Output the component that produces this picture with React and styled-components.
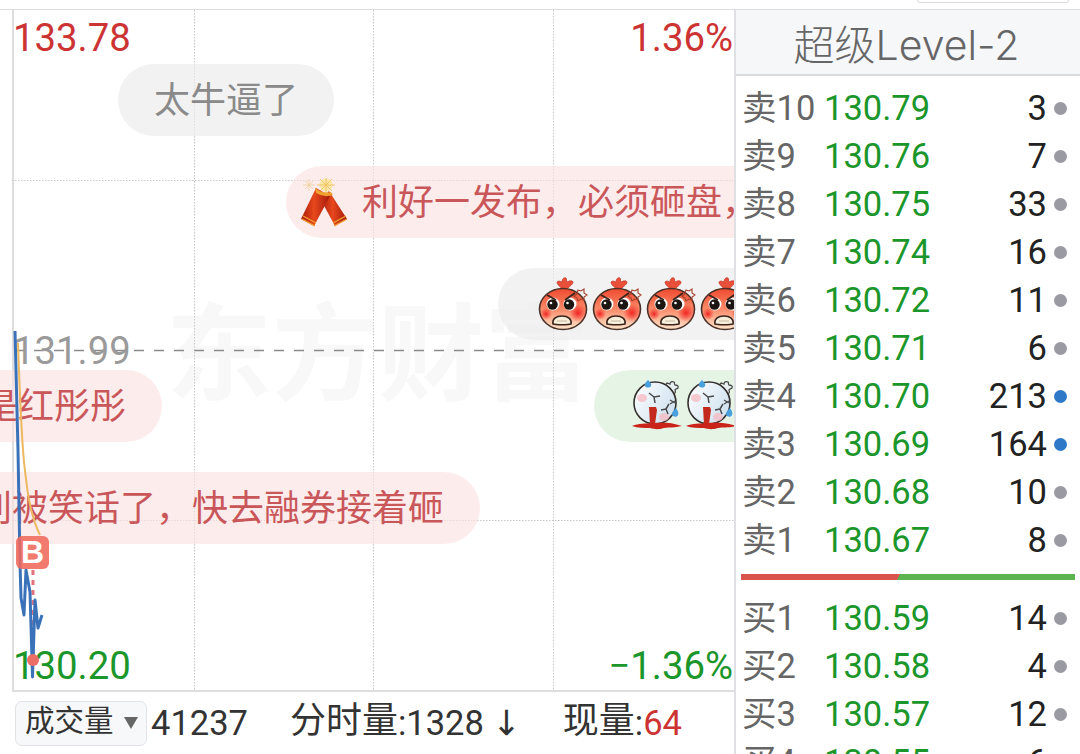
import React from 'react';
import styled, {createGlobalStyle} from 'styled-components';

const GlobalStyle = createGlobalStyle`
  html, body {
    margin: 0;
    padding: 0;
    background: #fff;
    overflow: hidden;
  }
  body {
    font-family: Roboto, "Noto Sans CJK SC", sans-serif;
  }
`;

const Page = styled.div`
  width: 1080px;
  height: 754px;
  display: flex;
  flex-direction: column;
  overflow: hidden;
`;

const TopStrip = styled.div`
  height: 9px;
  flex: none;
  display: flex;
  justify-content: flex-end;
  align-items: flex-start;
  padding-right: 11px;
  border-bottom: 1px solid #dcdcdf;
`;

const TabEdge = styled.div`
  width: 150px;
  height: 2px;
  border: 1px solid #dcdde0;
  border-top: none;
  border-radius: 0 0 5px 5px;
`;

const Main = styled.div`
  flex: 1;
  display: flex;
  min-height: 0;
`;

const LeftColumn = styled.div`
  width: 734px;
  flex: none;
  display: flex;
  flex-direction: column;
`;

const ChartArea = styled.div`
  position: relative;
  height: 682px;
  flex: none;
  overflow: hidden;
`;

const Plot = styled.div`
  height: 680px;
  margin-left: 12px;
  border-left: 2px solid #dedede;
  border-bottom: 2px solid #dedede;
`;

const Watermark = styled.div`
  position: absolute;
  left: 166px;
  top: 276px;
  font-family: "Noto Sans CJK SC", sans-serif;
  font-size: 106px;
  line-height: 120px;
  font-weight: 700;
  color: #f8f8f8;
  white-space: nowrap;
`;

const ChartDrawing = styled.svg`
  position: absolute;
  left: 0;
  top: 0;
`;

const PriceLabel = styled.div`
  position: absolute;
  top: ${p => p.$top}px;
  ${p => (p.$right ? 'right: 1px;' : 'left: 13px;')}
  font-size: 38.3px;
  line-height: 44px;
  color: ${p => p.$color};
`;

const BUBBLE_TONES = {
  grey: {bg: 'rgba(236, 236, 236, 0.68)', fg: '#8a8a8a'},
  red: {bg: 'rgba(251, 224, 224, 0.62)', fg: '#c9575a'},
  green: {bg: '#e6f4e6', fg: '#5a9a5a'},
};

const Bubble = styled.div`
  position: absolute;
  top: ${p => p.$top}px;
  left: ${p => p.$left}px;
  ${p => (p.$toEdge ? 'right: 0;' : '')}
  height: 72px;
  box-sizing: border-box;
  display: flex;
  align-items: center;
  padding: 0 36px ${p => (p.$icons ? 0 : 7)}px ${p => p.$pad ?? 36}px;
  border-radius: 36px;
  ${p => (p.$toEdge ? 'border-radius: 36px 0 0 36px; padding-right: 0;' : '')}
  background: ${p => BUBBLE_TONES[p.$tone].bg};
  color: ${p => BUBBLE_TONES[p.$tone].fg};
  font-family: "Noto Sans CJK SC", sans-serif;
  font-size: 36px;
  line-height: 60px;
  white-space: nowrap;
  overflow: hidden;
`;

const BubbleIcon = styled.span`
  display: flex;
  flex: none;
  margin-right: ${p => p.$gap}px;
  margin-top: ${p => p.$shift}px;
`;

const TradeMark = styled.div`
  position: absolute;
  left: 16px;
  top: 526px;
  width: 33px;
  height: 33px;
  border-radius: 6px;
  background: rgba(240, 105, 92, 0.88);
  color: #fff;
  font-family: "Liberation Sans", sans-serif;
  font-size: 32px;
  font-weight: 700;
  line-height: 33px;
  text-align: center;
`;

const VolumeBar = styled.div`
  flex: 1;
  display: flex;
  align-items: center;
  padding-left: 15px;
  color: #333;
  font-size: 34.5px;
  line-height: 44px;
  white-space: nowrap;
`;

const VolumeSelect = styled.div`
  width: 132px;
  height: 45px;
  box-sizing: border-box;
  display: flex;
  align-items: center;
  padding: 0 0 5px 9px;
  border: 1px solid #e2e3e6;
  border-radius: 7px;
  background: #f7f8f9;
  font-size: 29.5px;
  color: #333;
`;

const Caret = styled.span`
  width: 0;
  height: 0;
  margin: 5px 0 0 10px;
  border-left: 7px solid transparent;
  border-right: 7px solid transparent;
  border-top: 12px solid #666;
`;

const VolumeItem = styled.span`
  margin-left: ${p => p.$gap}px;
`;

const Cjk = styled.span`
  font-size: 36px;
  line-height: 0;
  vertical-align: 2px;
`;

const Arrow = styled.span`
  margin-left: 8px;
  font-family: "DejaVu Sans", sans-serif;
  line-height: 0;
`;

const Red = styled.span`
  color: #cc3333;
`;

const SidePanel = styled.div`
  flex: 1;
  display: flex;
  flex-direction: column;
  border-left: 2px solid #dfe0e3;
  overflow: hidden;
`;

const SideTitle = styled.div`
  height: 64px;
  flex: none;
  display: flex;
  align-items: center;
  justify-content: center;
  padding-right: 3px;
  background: #f6f7f9;
  border-bottom: 2px solid #d9dadd;
  color: #666;
  font-family: Inter, "Noto Sans CJK SC", sans-serif;
  font-size: 41px;
  font-weight: 300;
`;

const Rows = styled.div`
  flex: none;
  padding: ${p => p.$top}px 13px 0 6px;
`;

const Row = styled.div`
  height: 48px;
  display: grid;
  grid-template-columns: 82px 1fr auto 20px;
  align-items: center;
  font-size: 34.5px;
  line-height: 48px;
`;

const Level = styled.span`
  color: #666;
  white-space: nowrap;
`;

const Price = styled.span`
  color: #1b962a;
`;

const Qty = styled.span`
  color: #222;
`;

const Dot = styled.span`
  justify-self: end;
  width: 13px;
  height: 13px;
  border-radius: 50%;
  background: ${p => (p.$big ? '#2f78c8' : '#9a9aa2')};
`;

const RatioBar = styled.div`
  height: 6px;
  margin: 10px 5px 0 5px;
  flex: none;
  background: linear-gradient(120deg, #d9534f 47.2%, #5cb450 47.2%);
`;

const asks = [
  ['卖10', '130.79', 3],
  ['卖9', '130.76', 7],
  ['卖8', '130.75', 33],
  ['卖7', '130.74', 16],
  ['卖6', '130.72', 11],
  ['卖5', '130.71', 6],
  ['卖4', '130.70', 213],
  ['卖3', '130.69', 164],
  ['卖2', '130.68', 10],
  ['卖1', '130.67', 8],
];

const bids = [
  ['买1', '130.59', 14],
  ['买2', '130.58', 4],
  ['买3', '130.57', 12],
  ['买4', '130.55', 6],
];

const Firecracker = function () {
  return (
    <svg width="48" height="50" viewBox="0 0 48 50">
      <defs>
        <linearGradient id="tube" x1="0" y1="0" x2="1" y2="0">
          <stop offset="0" stopColor="#a81c0c" />
          <stop offset="0.45" stopColor="#e8481c" />
          <stop offset="1" stopColor="#a3180c" />
        </linearGradient>
      </defs>
      <g stroke="#efcf9a" strokeWidth="0.8">
        <path d="M3 7h12M9 1v12M5 3l8 8M13 3l-8 8" />
      </g>
      <circle cx="26" cy="7" r="6.5" fill="#fbe7a8" />
      <g stroke="#f0c060" strokeWidth="0.9">
        <path d="M17 7h18M26 0v15M20 1l12 12M32 1l-12 12" />
      </g>
      <polygon points="29,13 47,41 35,48 21,22" fill="url(#tube)" />
      <polygon points="16,10 30,18 14,48 1,41" fill="url(#tube)" />
      <path d="M15 10q8 6 16 4l2 3q-9 3-17-2z" fill="#f0a030" />
      <path d="M3 38l13 7M2 41l13 7M33 45l13-7M34 48l13-7" stroke="#f0a030" strokeWidth="1.3" fill="none" />
    </svg>
  );
};

const AngryFace = function () {
  return (
    <BubbleIcon $gap={0} $shift={0}>
      <svg width="54" height="56" viewBox="0 0 54 56">
        <defs>
          <linearGradient id="angry" x1="0" y1="0" x2="0" y2="1">
            <stop offset="0" stopColor="#f0492f" />
            <stop offset="0.5" stopColor="#f98a68" />
            <stop offset="1" stopColor="#fde6cc" />
          </linearGradient>
          <radialGradient id="blush">
            <stop offset="0" stopColor="#f01818" stopOpacity="0.9" />
            <stop offset="1" stopColor="#f01818" stopOpacity="0" />
          </radialGradient>
        </defs>
        <path d="M25 14c-2-3-6-5-6-8 2-2 4 0 5 0 0-3 2-5 4-4 1 1 0 3 1 4 2-1 5-2 6 0 0 3-5 5-7 8z" fill="#e9503a" stroke="#c93a2a" strokeWidth="0.8" />
        <ellipse cx="25" cy="33" rx="23.5" ry="20.5" fill="url(#angry)" stroke="#4a3026" strokeWidth="1.6" />
        <circle cx="8" cy="38" r="6" fill="url(#blush)" />
        <circle cx="40" cy="37" r="9" fill="url(#blush)" />
        <circle cx="15" cy="28" r="6.5" fill="#fff" />
        <circle cx="32" cy="28" r="6.5" fill="#fff" />
        <circle cx="14.5" cy="28.5" r="5.2" fill="#1d1512" />
        <circle cx="31" cy="28.5" r="5.2" fill="#1d1512" />
        <circle cx="13" cy="27" r="1.3" fill="#fff" />
        <circle cx="29.5" cy="27" r="1.3" fill="#fff" />
        <path d="M9 19l9 5M37 17l-10 7" stroke="#3a241c" strokeWidth="1.8" fill="none" />
        <path d="M15 48c-1-5 3-8 9-8s10 3 9 8c-3 1-15 1-18 0z" fill="#f7efdc" stroke="#3a241c" strokeWidth="1.6" />
        <path d="M19 45h10" stroke="#b8ab96" strokeWidth="0.8" />
        <path d="M40 14l3 1 3-2 0 4 3 2-3 2 0 3-3-1-3 2-1-3-3-2 3-2z" fill="none" stroke="#a5402c" strokeWidth="1.1" />
      </svg>
    </BubbleIcon>
  );
};

const DeadFace = function () {
  return (
    <BubbleIcon $gap={0} $shift={0}>
      <svg width="54" height="56" viewBox="0 0 54 56">
        <defs>
          <linearGradient id="dead" x1="0" y1="0" x2="1" y2="0.6">
            <stop offset="0" stopColor="#fff" />
            <stop offset="1" stopColor="#cfe2ef" />
          </linearGradient>
        </defs>
        <path d="M37 12c-2-3-3-6-1-7 1 0 2 1 3 1 0-2 2-3 4-2 1 1 0 2 1 3 2 0 4 1 3 3-1 1-3 1-3 2 1 2 0 4-2 4-2-1-4-2-5-4z" fill="#e8f0f2" stroke="#4a4a4a" strokeWidth="1.3" />
        <circle cx="24" cy="25" r="21" fill="url(#dead)" stroke="#35302e" strokeWidth="1.6" />
        <ellipse cx="11" cy="20" rx="5" ry="4" fill="#f6bcc4" opacity="0.8" />
        <ellipse cx="33" cy="39" rx="5" ry="4" fill="#f6bcc4" opacity="0.8" />
        <path d="M18 15l5 4m1 6l-1-6m0 0l6-1" stroke="#4a4a4a" strokeWidth="1.5" fill="none" />
        <path d="M30 32l5-1m2 5l-2-5m0 0l3-5" stroke="#4a4a4a" strokeWidth="1.5" fill="none" />
        <path d="M39 22l5 3M39 26l5-3" stroke="#4a4a4a" strokeWidth="1.3" />
        <path d="M18 29h7l1 3-2 14h-5z" fill="#c3291c" />
        <path d="M1 48c7-3 13-2 21-3s18-1 29 3c-8 2-12 1-18 2-6 2-10 1-14 0-6 0-12 0-18-2z" fill="#c9231a" />
        <path d="M17 2c2 2 4 4 3 6-1 2-5 2-6 0-1-2 1-4 3-6z" fill="#4aa0dc" />
        <path d="M45 30c2 3 3 5 2 7-1 3-6 2-6-1 0-2 2-4 4-6z" fill="#4aa0dc" />
      </svg>
    </BubbleIcon>
  );
};

const grid = 'M194.5 10V690M373.5 10V690M553.5 10V690M12 180.5H734M12 520.5H734';

const Chart = function () {
  return (
    <ChartArea>
      <Plot />
      <Watermark>东方财富</Watermark>
      <ChartDrawing width="734" height="680" viewBox="0 10 734 680">
        <path d="M14 350.5H734" stroke="#8a8a8a" strokeWidth="1.5" strokeDasharray="10 10" fill="none" />
        <path d={grid} stroke="#c8c8c8" strokeWidth="1" strokeDasharray="1.5 1.5" fill="none" />
      </ChartDrawing>
      <PriceLabel $top={6} $color="#cc3333">133.78</PriceLabel>
      <PriceLabel $top={6} $right $color="#cc3333">1.36%</PriceLabel>
      <PriceLabel $top={319} $color="#9a9a9a">131.99</PriceLabel>
      <PriceLabel $top={634} $color="#1b962a">130.20</PriceLabel>
      <PriceLabel $top={634} $right $color="#1b962a">−1.36%</PriceLabel>

      <Bubble $top={54} $left={118} $tone="grey">太牛逼了</Bubble>
      <Bubble $top={156} $left={286} $pad={14} $tone="red" $toEdge>
        <BubbleIcon $gap={14} $shift={9}><Firecracker /></BubbleIcon>
        利好一发布，必须砸盘，
      </Bubble>
      <Bubble $top={258} $left={498} $pad={40} $tone="grey" $toEdge $icons>
        {[0, 1, 2, 3].map(i => <AngryFace key={i} />)}
      </Bubble>
      <Bubble $top={360} $left={-54} $tone="red">是红彤彤</Bubble>
      <Bubble $top={360} $left={594} $pad={37} $tone="green" $toEdge $icons>
        {[0, 1].map(i => <DeadFace key={i} />)}
      </Bubble>
      <Bubble $top={462} $left={-60} $tone="red">别被笑话了，快去融券接着砸</Bubble>

      <ChartDrawing width="734" height="680" viewBox="0 10 734 680">
        <path d="M18 343C20 400 21 430 24 462C27 490 30 515 40 535" stroke="#ecb860" strokeWidth="2" fill="none" />
        <path d="M33 570V660" stroke="#e2737c" strokeWidth="3" strokeDasharray="5 5" fill="none" />
        <path d="M15 331L18 450L20 563L21 598L24 615L26 570L30 592L32.5 677L35 600L38 628L42 615" stroke="#3a72ba" strokeWidth="3" strokeLinejoin="round" fill="none" />
        <circle cx="33" cy="660" r="6" fill="#ea6e66" />
      </ChartDrawing>
      <TradeMark>B</TradeMark>
    </ChartArea>
  );
};

const App = function () {
  return (
    <Page>
      <GlobalStyle />
      <TopStrip><TabEdge /></TopStrip>
      <Main>
        <LeftColumn>
          <Chart />
          <VolumeBar>
            <VolumeSelect>成交量<Caret /></VolumeSelect>
            <VolumeItem $gap={4}>41237</VolumeItem>
            <VolumeItem $gap={42}><Cjk>分时量</Cjk>:1328<Arrow>↓</Arrow></VolumeItem>
            <VolumeItem $gap={42}><Cjk>现量</Cjk>:<Red>64</Red></VolumeItem>
          </VolumeBar>
        </LeftColumn>
        <SidePanel>
          <SideTitle>超级Level-2</SideTitle>
          <Rows $top={8}>
            {asks.map(([level, price, qty]) => (
              <Row key={level}>
                <Level>{level}</Level>
                <Price>{price}</Price>
                <Qty>{qty}</Qty>
                <Dot $big={qty > 100} />
              </Row>
            ))}
          </Rows>
          <RatioBar />
          <Rows $top={14}>
            {bids.map(([level, price, qty]) => (
              <Row key={level}>
                <Level>{level}</Level>
                <Price>{price}</Price>
                <Qty>{qty}</Qty>
                <Dot />
              </Row>
            ))}
          </Rows>
        </SidePanel>
      </Main>
    </Page>
  );
};

export default App;
